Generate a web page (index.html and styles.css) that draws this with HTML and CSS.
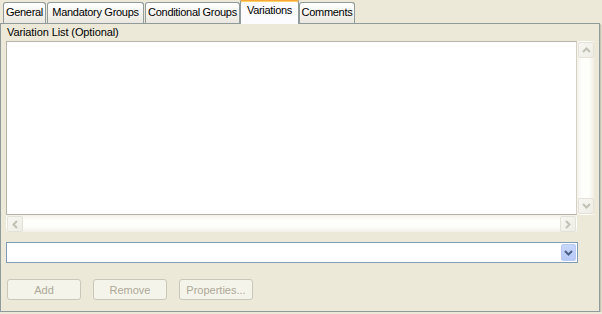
FILE: index.html
```html
<!DOCTYPE html>
<html lang="en">
<head>
    <meta charset="UTF-8">
    <title>Variations</title>
    <link rel="stylesheet" href="styles.css">
</head>
<body>
    <div class="tabs">
        <div class="tab t-general">General</div>
        <div class="tab t-mandatory">Mandatory Groups</div>
        <div class="tab t-conditional">Conditional Groups</div>
        <div class="tab active">Variations</div>
        <div class="tab t-comments">Comments</div>
    </div>

    <div class="panel">
        <div class="caption">Variation List (Optional)</div>

        <div class="list-row">
            <div class="list"></div>
            <div class="vscroll">
                <div class="sbtn">
                    <svg width="9" height="6" viewBox="0 0 9 6"><path d="M1 5 L4.5 1.5 L8 5" fill="none" stroke="#c3c1b5" stroke-width="2"/></svg>
                </div>
                <div class="sbtn">
                    <svg width="9" height="6" viewBox="0 0 9 6"><path d="M1 1 L4.5 4.5 L8 1" fill="none" stroke="#c3c1b5" stroke-width="2"/></svg>
                </div>
            </div>
        </div>
        <div class="hscroll">
            <div class="sbtn">
                <svg width="6" height="9" viewBox="0 0 6 9"><path d="M5 1 L1.5 4.5 L5 8" fill="none" stroke="#c3c1b5" stroke-width="2"/></svg>
            </div>
            <div class="sbtn">
                <svg width="6" height="9" viewBox="0 0 6 9"><path d="M1 1 L4.5 4.5 L1 8" fill="none" stroke="#c3c1b5" stroke-width="2"/></svg>
            </div>
        </div>

        <div class="combo">
            <div class="combo-btn">
                <svg width="9" height="6" viewBox="0 0 9 6"><path d="M1 1 L4.5 4.5 L8 1" fill="none" stroke="#4d6185" stroke-width="2"/></svg>
            </div>
        </div>

        <div class="buttons">
            <button disabled>Add</button>
            <button disabled>Remove</button>
            <button disabled>Properties...</button>
        </div>
    </div>
</body>
</html>
```

FILE: styles.css
```css
body {
    margin: 0;
    background: #ece9d8;
    font-family: "Liberation Sans", Arial, sans-serif;
    font-size: 11px;
    color: #000;
}

.tabs {
    display: flex;
    align-items: flex-end;
    height: 23px;
    padding-left: 3px;
    position: relative;
    z-index: 1;
}
.tab {
    box-sizing: border-box;
    height: 21px;
    line-height: 19px;
    padding: 0;
    margin-right: 1px;
    border: 1px solid #919b9c;
    border-bottom: none;
    border-radius: 3px 3px 0 0;
    background: linear-gradient(#ffffff, #f3f2ec 60%, #e9e7de);
    white-space: nowrap;
    text-align: center;
    letter-spacing: -0.3px;
}
.t-general { width: 43px; }
.t-mandatory { width: 97px; }
.t-conditional { width: 95px; margin-right: 0; }
.t-comments { width: 56px; }
.tab.active {
    width: 59px;
    height: 25px;
    line-height: 19px;
    margin: 0 0 -1px 0;
    border-top: 2px solid #f7a838;
    box-shadow: inset 0 1px 0 #ffd06a;
    background: #fcfcfe;
}

.panel {
    box-sizing: border-box;
    width: 600px;
    height: 289px;
    border: 1px solid #919b9c;
    box-shadow: 1px 1px 0 #c9c6b6, 2px 2px 0 #dedbcb;
    padding: 0 5px;
}
.caption {
    height: 17px;
    line-height: 17px;
    padding-left: 1px;
    letter-spacing: -0.1px;
}

.list-row {
    display: flex;
    height: 174px;
}
.list {
    box-sizing: border-box;
    width: 571px;
    border: 1px solid #b5b3aa;
    border-right-color: #d4d1c4;
    background: #fff;
}
.vscroll {
    box-sizing: border-box;
    width: 17px;
    display: flex;
    flex-direction: column;
    justify-content: space-between;
    padding: 1px 0 1px 1px;
    background: linear-gradient(to right, #f3f1ea, #fefefb 30%, #fdfdfa 70%, #f1efe6);
}
.hscroll {
    box-sizing: border-box;
    width: 571px;
    height: 17px;
    display: flex;
    justify-content: space-between;
    padding: 1px 1px 0 1px;
    background: linear-gradient(#f3f1ea, #fefefb 30%, #fdfdfa 70%, #f1efe6);
}
.sbtn {
    box-sizing: border-box;
    width: 16px;
    height: 16px;
    border: 1px solid #e3e1d8;
    border-radius: 2px;
    background: linear-gradient(135deg, #f7f6f1, #eeede5);
    display: flex;
    align-items: center;
    justify-content: center;
}

.combo {
    box-sizing: border-box;
    width: 572px;
    height: 21px;
    margin-top: 10px;
    border: 1px solid #7f9db9;
    background: #fff;
    display: flex;
    justify-content: flex-end;
    padding: 1px;
}
.combo-btn {
    box-sizing: border-box;
    width: 15px;
    height: 17px;
    border: 1px solid #bbcaf5;
    border-radius: 2px;
    background: linear-gradient(#c8d7fc, #b7c9f6);
    display: flex;
    align-items: center;
    justify-content: center;
}

.buttons {
    display: flex;
    gap: 12px;
    margin-top: 16px;
    padding-left: 1px;
}
.buttons button {
    box-sizing: border-box;
    width: 74px;
    height: 21px;
    padding: 0;
    border: 1px solid #c9c7ba;
    border-radius: 3px;
    background: #f5f4ea;
    color: #aca899;
    font-family: inherit;
    font-size: 11px;
}
```
